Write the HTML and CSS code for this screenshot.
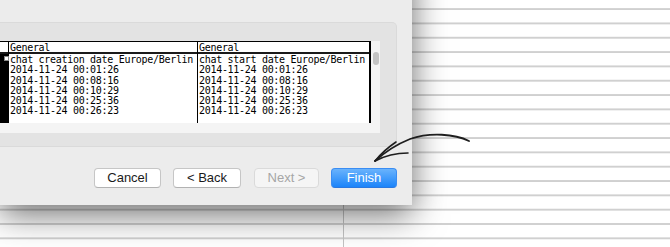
FILE: index.html
```html
<!DOCTYPE html>
<html>
<head>
<meta charset="utf-8">
<link rel="stylesheet" href="styles.css">
</head>
<body>
<div class="desk">
  <div class="dialog">
    <div class="group">
      <div class="scroll">
        <div class="table">
          <div class="col col-gutter">
            <div class="head"></div>
            <div class="body"><span class="mark"></span></div>
          </div>
          <div class="col col-a">
            <div class="head">General</div>
            <div class="body">
              <div class="row">chat creation date Europe/Berlin</div>
              <div class="row">2014-11-24 00:01:26</div>
              <div class="row">2014-11-24 00:08:16</div>
              <div class="row">2014-11-24 00:10:29</div>
              <div class="row">2014-11-24 00:25:36</div>
              <div class="row">2014-11-24 00:26:23</div>
            </div>
          </div>
          <div class="col col-b">
            <div class="head">General</div>
            <div class="body">
              <div class="row">chat start date Europe/Berlin</div>
              <div class="row">2014-11-24 00:01:26</div>
              <div class="row">2014-11-24 00:08:16</div>
              <div class="row">2014-11-24 00:10:29</div>
              <div class="row">2014-11-24 00:25:36</div>
              <div class="row">2014-11-24 00:26:23</div>
            </div>
          </div>
        </div>
        <div class="scrollbar"><div class="thumb"></div></div>
      </div>
    </div>
    <div class="buttons">
      <button class="btn btn-cancel">Cancel</button>
      <button class="btn btn-back">&lt; Back</button>
      <button class="btn btn-next" disabled>Next &gt;</button>
      <button class="btn btn-finish">Finish</button>
    </div>
  </div>
  <svg class="arrow" width="670" height="247" viewBox="0 0 670 247">
    <path d="M469 141 C455 134 430 132 410 139 C395 145 385 152 375 161" fill="none" stroke="#1e1e1e" stroke-width="1.8" stroke-linecap="round"/>
    <path d="M375 161 Q384 150 396 142" fill="none" stroke="#1e1e1e" stroke-width="1.6" stroke-linecap="round"/>
    <path d="M375 161 Q390 153 408 153" fill="none" stroke="#1e1e1e" stroke-width="1.6" stroke-linecap="round"/>
  </svg>
</div>
</body>
</html>
```
FILE: styles.css
```css
html, body {
  margin: 0;
  padding: 0;
}
body {
  width: 670px;
  height: 247px;
  overflow: hidden;
  background: #fff;
}
.desk {
  position: relative;
  width: 670px;
  height: 247px;
  overflow: hidden;
  background:
    linear-gradient(#c4c4c4, #c4c4c4) 343px 0 / 1px 100% no-repeat,
    repeating-linear-gradient(180deg, #ffffff 0, #ffffff 12.8px, #d0d0d0 12.8px, #d0d0d0 14.33px) 0 -4.3px / 100% 14.33px repeat;
}
.dialog {
  width: 412px;
  height: 245px;
  margin-top: -40px;
  padding-top: 62px;
  box-sizing: border-box;
  background: #ececec;
  display: flex;
  flex-direction: column;
  box-shadow: 0 9px 32px rgba(0, 0, 0, 0.58);
}
.group {
  width: 397px;
  height: 125px;
  box-sizing: border-box;
  background: #e3e3e3;
  border: 1px solid #dadada;
  border-left: none;
  border-radius: 0 5px 5px 0;
  padding-top: 18px;
}
.scroll {
  width: 380px;
  height: 92px;
  background: #f4f4f4;
  display: flex;
}
.table {
  width: 371px;
  height: 82px;
  box-sizing: border-box;
  background: #fff;
  border-top: 1px solid #000;
  border-right: 2px solid #000;
  display: flex;
  font-family: "DejaVu Sans Mono", "Liberation Mono", monospace;
  font-size: 10px;
  letter-spacing: -0.3px;
  color: #000;
}
.col {
  display: flex;
  flex-direction: column;
}
.head {
  height: 10px;
  line-height: 11px;
  border-bottom: 2px solid #1a1a1a;
  padding-left: 1px;
  white-space: nowrap;
}
.body {
  flex: 1;
  padding-top: 1px;
  padding-left: 1px;
}
.row {
  height: 10.3px;
  line-height: 10.3px;
  white-space: nowrap;
}
.col-gutter {
  width: 8px;
  border-right: 1px solid #000;
}
.col-gutter .head {
  padding: 0;
}
.col-gutter .body {
  background: #000;
  padding: 0;
}
.mark {
  display: block;
  width: 3px;
  height: 3px;
  margin: 2px 0 0 4px;
  background: #fff;
  border: 0.5px solid #888;
}
.col-a {
  width: 188px;
  border-right: 1px solid #000;
}
.col-b {
  flex: 1;
}
.scrollbar {
  width: 9px;
}
.thumb {
  width: 6px;
  height: 13px;
  margin: 11px 0 0 2px;
  border-radius: 3px;
  background: #c3c3c3;
}
.buttons {
  margin-top: 21px;
  width: 397px;
  display: flex;
  justify-content: flex-end;
  gap: 12px;
}
.btn {
  height: 20px;
  box-sizing: border-box;
  padding: 0;
  font-family: "Liberation Sans", Arial, sans-serif;
  font-size: 13px;
  line-height: 18px;
  color: #1a1a1a;
  background: #fff;
  border: 1px solid #c6c6c6;
  border-bottom-color: #b2b2b2;
  border-radius: 4px;
}
.btn-cancel { width: 67px; }
.btn-back { width: 68px; margin-right: 1px; }
.btn-next {
  width: 65px;
  background: #f5f5f5;
  border-color: #dadada;
  color: #a6a6a6;
}
.btn-finish {
  width: 66px;
  color: #fff;
  background: linear-gradient(#6ab3fc, #1b84fa);
  border-color: #3a8df3;
  border-bottom-color: #2a78e0;
}
.arrow {
  position: absolute;
  left: 0;
  top: 0;
  pointer-events: none;
}
```
